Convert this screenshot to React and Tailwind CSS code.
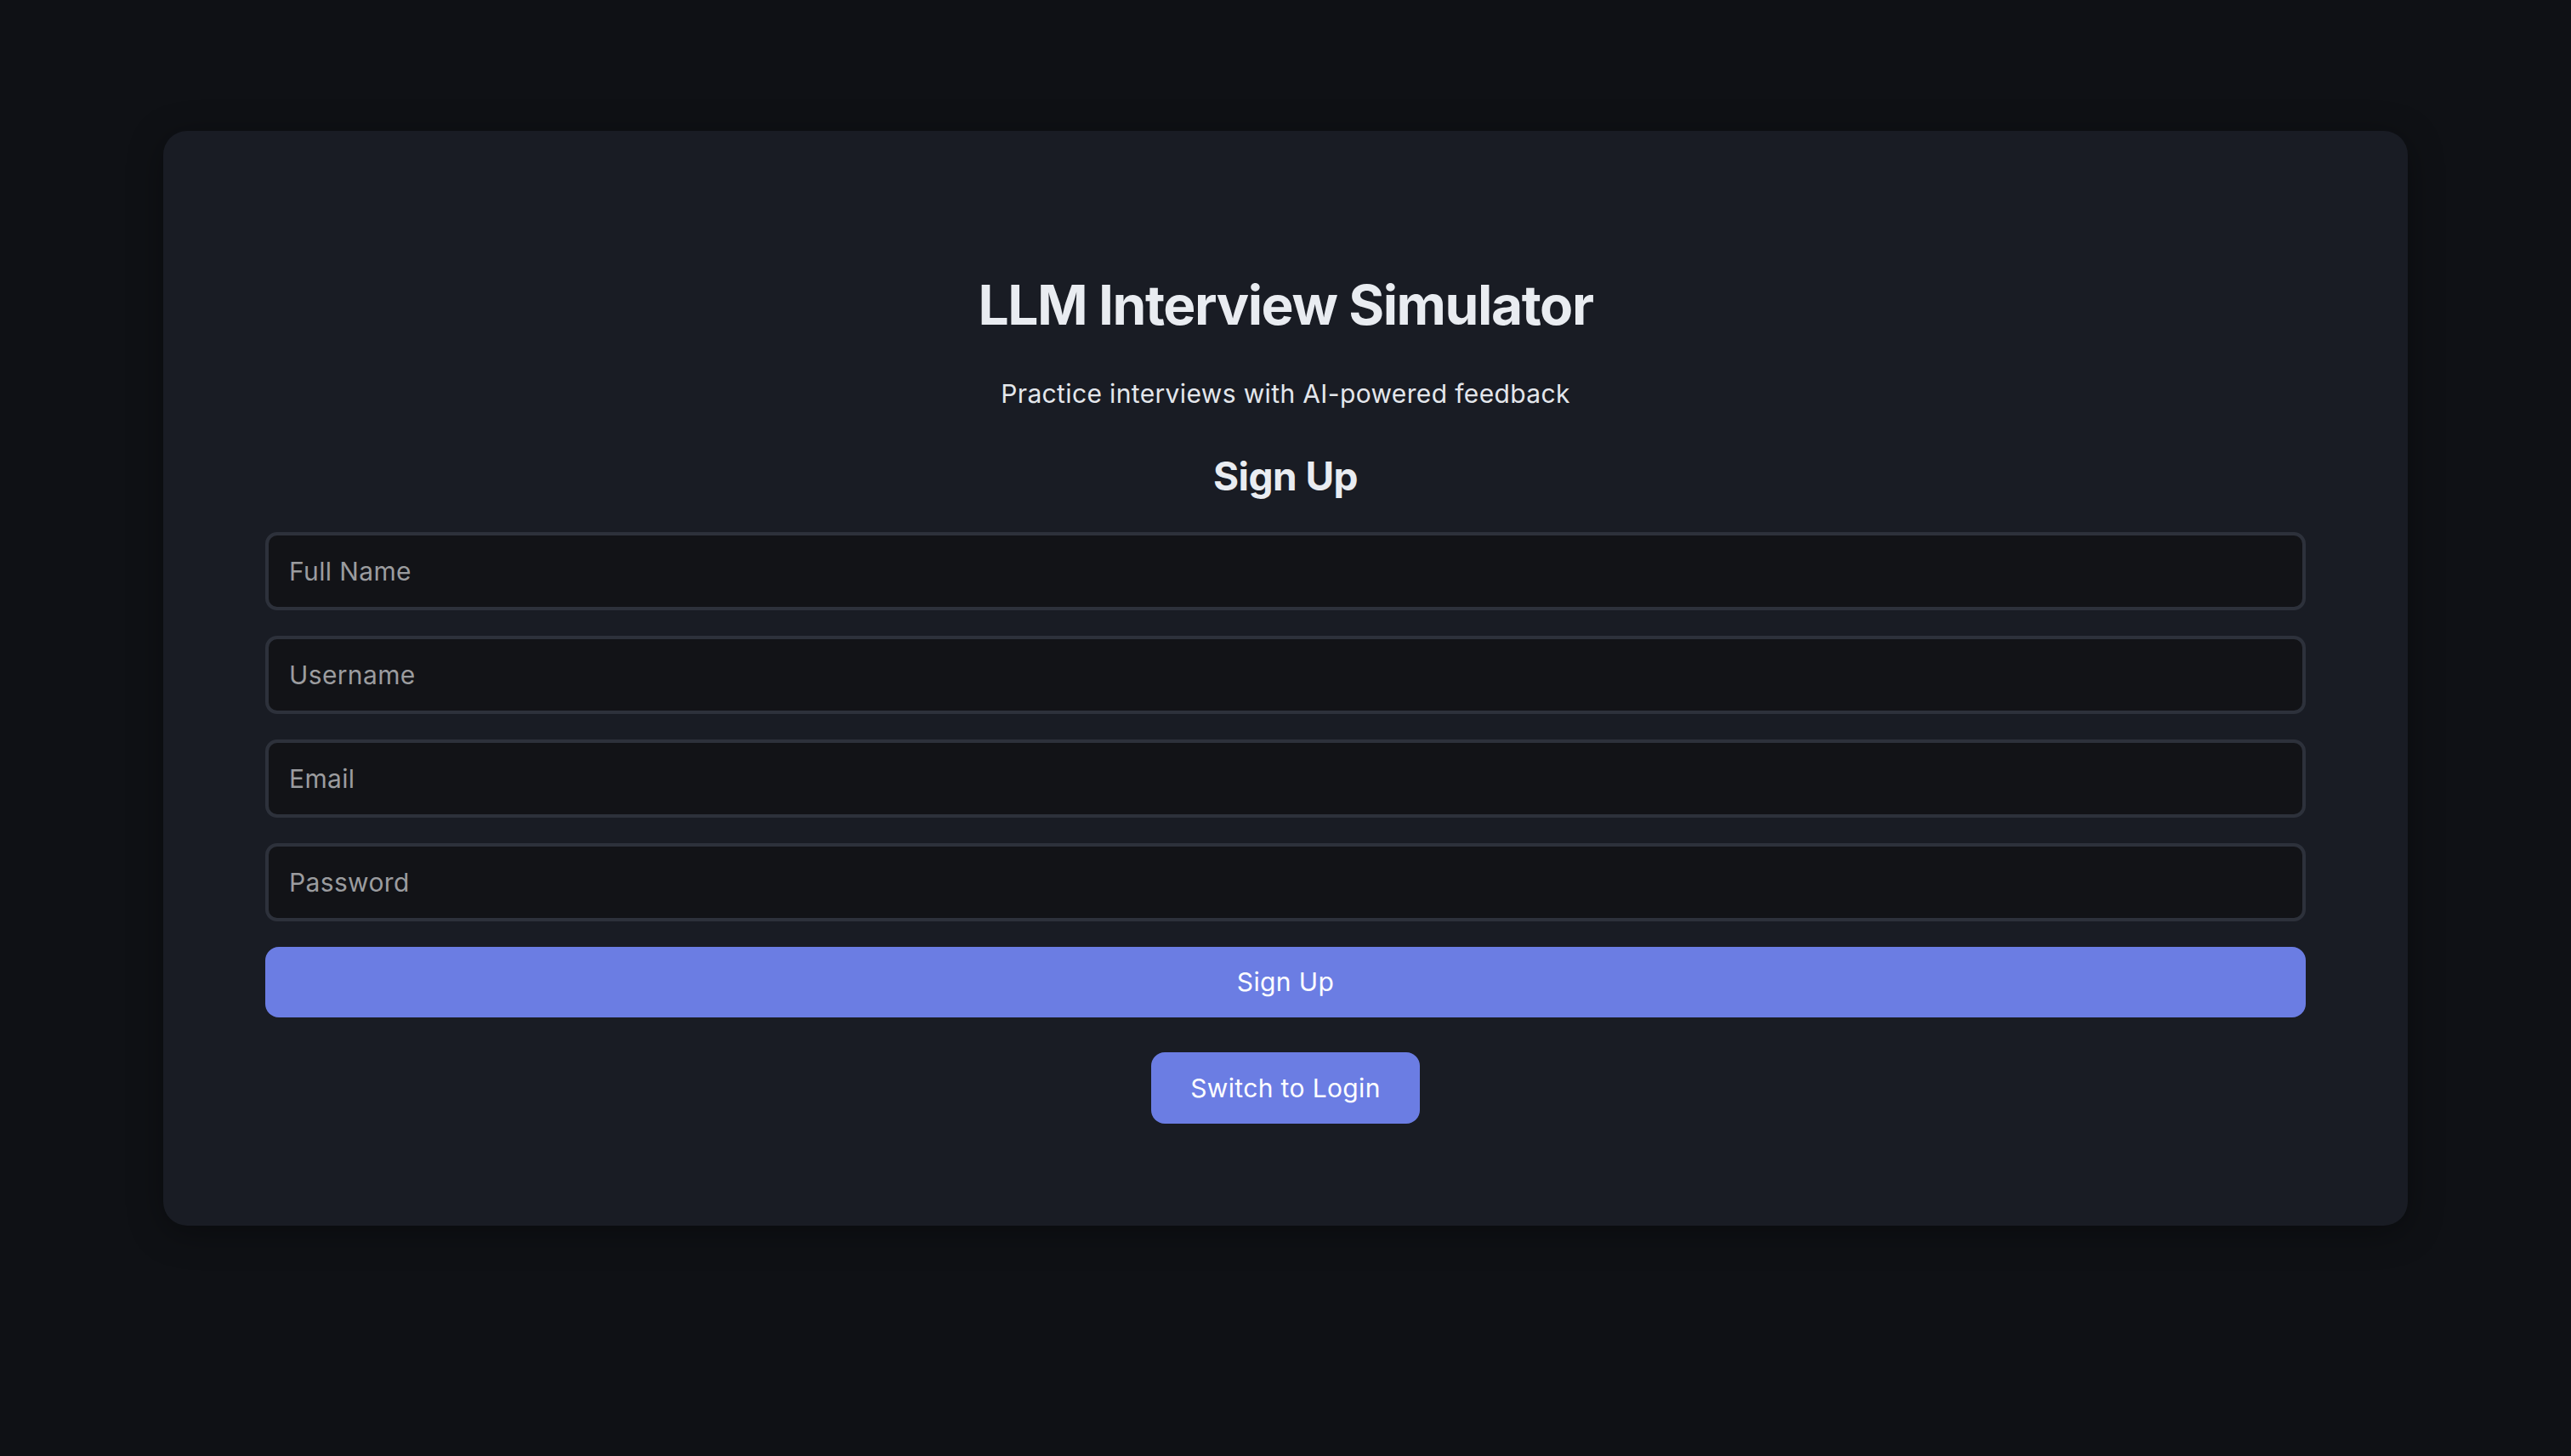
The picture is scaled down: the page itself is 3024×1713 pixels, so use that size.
import React, { useState } from 'react'

const fields = [
  { name: 'fullName', type: 'text', placeholder: 'Full Name' },
  { name: 'username', type: 'text', placeholder: 'Username' },
  { name: 'email', type: 'email', placeholder: 'Email' },
  { name: 'password', type: 'password', placeholder: 'Password' },
]

export default function App() {
  const [form, setForm] = useState({ fullName: '', username: '', email: '', password: '' })

  const update = (name) => (e) => setForm(f => ({ ...f, [name]: e.target.value }))

  return (
    <div className="min-h-screen bg-[#0f1115] pt-[154px] pb-[80px] font-['Inter','Liberation_Sans',sans-serif]">
      <div className="mx-[192px] rounded-[28px] bg-[#191c24] px-[120px] pt-[166px] pb-[120px] shadow-[0_8px_40px_rgba(0,0,0,0.35)]">
        <h1 className="text-center text-[64px] leading-[77px] font-bold tracking-[-0.022em] text-[#e9ecf1]">
          LLM Interview Simulator
        </h1>
        <p className="mt-[44px] text-center text-[30px] leading-[45px] tracking-[0.012em] text-[#e4e7ec]">
          Practice interviews with AI-powered feedback
        </p>
        <h2 className="mt-[47px] text-center text-[46px] leading-[55px] font-bold tracking-[-0.012em] text-[#e9ecf1]">
          Sign Up
        </h2>

        <form className="mt-[38px] flex flex-col gap-[30px]" onSubmit={e => e.preventDefault()}>
          {fields.map(f => (
            <input
              key={f.name}
              type={f.type}
              value={form[f.name]}
              onChange={update(f.name)}
              placeholder={f.placeholder}
              className="h-[92px] w-full rounded-[14px] border-[4px] border-[#2d313b] bg-[#121317] px-[24px] text-[30px] tracking-[0.012em] text-[#e4e7ec] placeholder:text-[#9b9c9f] outline-none"
            />
          ))}
          <button
            type="submit"
            className="h-[83px] w-full rounded-[16px] bg-[#6b7de3] text-[30px] tracking-[0.012em] text-white"
          >
            Sign Up
          </button>
        </form>

        <div className="mt-[41px] flex justify-center">
          <button className="h-[84px] rounded-[16px] bg-[#6b7de3] px-[46px] text-[30px] tracking-[0.012em] text-white">
            Switch to Login
          </button>
        </div>
      </div>
    </div>
  )
}
